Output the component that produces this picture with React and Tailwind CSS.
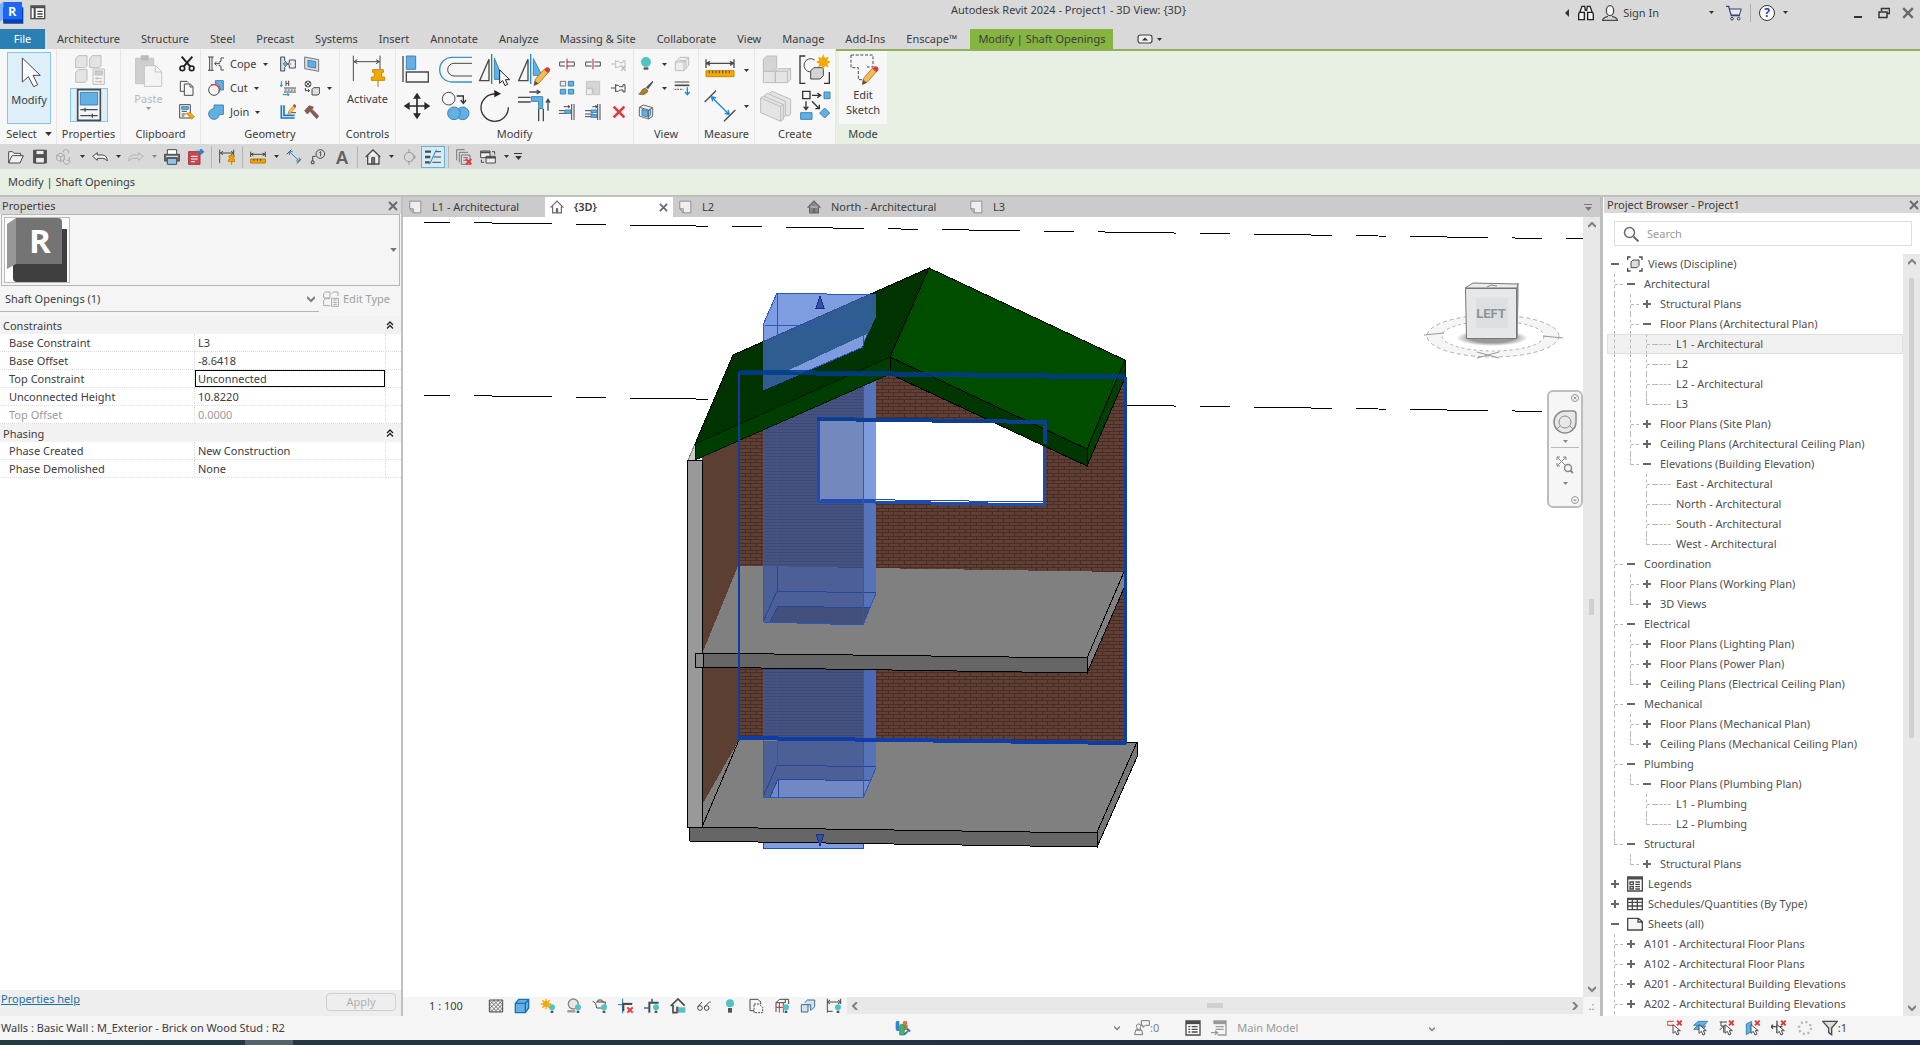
const INK = "#4a4a4a";
const BLUE = "#62b0e4";
const EDGE = "#3a84b8";
const CYAN = "#4fc4c4";
const GOLD = "#f5a800";
const RED = "#e03a3a";
const PALE = "#e4e4e4";
const MUTE = "#bdbdbd";

function Small({ children, className = "h-4 w-4" }) {
  return (
    <svg viewBox="0 0 48 48" className={`${className} shrink-0`} fill="none" stroke={INK} strokeWidth="3" aria-hidden="true">
      {children}
    </svg>
  );
}

function Large({ children }) {
  return (
    <svg viewBox="0 0 96 96" className="h-8 w-8 shrink-0 overflow-visible" fill="none" stroke={INK} strokeWidth="3" aria-hidden="true">
      {children}
    </svg>
  );
}

function Caret({ className = "text-[#333]", size = "h-[3px] w-[5px]" }) {
  return (
    <svg viewBox="0 0 5 3" className={`${size} shrink-0 ${className}`} aria-hidden="true">
      <path d="M0 0h5L2.5 3z" fill="currentColor" />
    </svg>
  );
}

function Chevron({ d, className = "h-2 w-2" }) {
  return (
    <svg viewBox="0 0 8 8" className={`${className} shrink-0`} fill="none" stroke="#808080" strokeWidth="2" aria-hidden="true">
      <path d={d} />
    </svg>
  );
}

const UP = "M0 6l4-4 4 4";
const DOWN = "M0 2l4 4 4-4";
const LEFT = "M6 0L2 4l4 4";
const RIGHT = "M2 0l4 4-4 4";

function Close({ className = "h-[10px] w-[10px]" }) {
  return (
    <svg viewBox="0 0 10 10" className={`${className} shrink-0`} stroke="#6b6b6b" strokeWidth="2" aria-hidden="true">
      <path d="M1 1l8 8M9 1l-8 8" />
    </svg>
  );
}

/* ---------- small icons, 48 unit grid ---------- */

const Cope = () => (
  <Small>
    <path d="M0 3h17M0 43h17M5 3v40M12 3v40M20 23h16M26 17l-6 6 6 6M48 6h-9v10l-7 3M48 42h-9V31l-7-3" />
  </Small>
);
const Cut = () => (
  <Small>
    <path d="M22 2h24v28h-9A20 20 0 0 0 22 10z" fill={BLUE} stroke={EDGE} />
    <circle cx="18" cy="30" r="16" fill="#f5f5f5" />
    <path d="M10 15a17 17 0 0 1 23 22" stroke={RED} strokeWidth="4" />
  </Small>
);
const Join = () => (
  <Small>
    <path d="M18 3h28v28H34a16 16 0 1 1-16-17z" fill={BLUE} stroke={EDGE} />
  </Small>
);
const WallJoin = () => (
  <Small>
    <path d="M2 3h12v10l8 11-8 11v10H2z" fill="#ddd" />
    <path d="M46 12v24H28v-8l-6-4 6-4v-8z" fill="#f2f2f2" />
    <path d="M34 24H10M18 16l-8 8 8 8" stroke="#1c88d8" />
  </Small>
);
const Opening = () => (
  <Small>
    <path d="M2 3l42 8v35L2 38z" fill="#ddd" stroke="#777" />
    <path d="M12 13l23 4v19l-23-4z" fill={BLUE} stroke={EDGE} />
  </Small>
);
const BeamJoin = () => (
  <Small>
    <path d="M18 2v16M26 2v16M18 10h8" />
    <path d="M12 24h36M12 36h36" />
    <path d="M14 30h34" strokeDasharray="6 3" />
    <path d="M4 4v16M0 14l4 6 4-6M8 44h18M22 40l6 4-6 4" stroke="#1c88d8" />
  </Small>
);
const PaintFace = () => (
  <Small>
    <circle cx="12" cy="12" r="9" />
    <path d="M6 6l12 12M18 6L6 18M4 24v8h12M12 28l5 4-5 4M24 28l5-5h18v16l-5 6H24z" fill="#ddd" />
  </Small>
);
const Profile = () => (
  <Small>
    <path d="M4 4v38h40M12 4v30h32" stroke="#1976c8" strokeWidth="5" />
    <path d="M24 26h24" />
    <path d="M26 22l14-16 6 5-14 16-8 3z" fill="#f7c053" stroke="#c77d1b" strokeWidth="2" />
    <path d="M38 5l5-5 7 6-5 5z" fill={RED} stroke="none" />
  </Small>
);
const Hammer = () => (
  <Small>
    <path d="M2 20L16 5l12 4-4 7 20 20-6 8-20-22-8 8z" fill="#8b5a55" stroke="#6b4a48" strokeWidth="2" />
  </Small>
);
const Scissors = () => (
  <Small>
    <path d="M8 2l26 30M40 2L14 32" strokeWidth="6" stroke="#222" />
    <circle cx="10" cy="37" r="7" strokeWidth="5" stroke="#222" />
    <circle cx="38" cy="37" r="7" strokeWidth="5" stroke="#222" />
  </Small>
);
const Copy = () => (
  <Small>
    <path d="M16 34H4V4h20l4 4" />
    <path d="M16 12h18l8 8v26H16zM33 13v8h8" fill="#f8f8f8" />
  </Small>
);
const MatchType = () => (
  <Small>
    <path d="M2 2h32v40H2zM8 22h16M8 30h12M8 36h8" />
    <path d="M8 8h20v8H8z" fill={BLUE} stroke={EDGE} />
    <path d="M22 28l12-2 12 12-8 8z" fill={GOLD} stroke="#b87a00" strokeWidth="2" />
  </Small>
);
const Split = ({ gap }) => (
  <Small>
    <path d={gap ? "M20 18H2v12h18M28 18h18v12H28" : "M18 18H2v12h16M24 18h22v12H24"} />
    <path d="M24 8v32" stroke="#cc2222" />
  </Small>
);
const ArrayIcon = () => (
  <Small>
    <path d="M28 4h16v14H28zM4 28h16v14H4zM28 28h16v14H28z" fill={BLUE} stroke={EDGE} />
    <path d="M4 4h16v14H4z" fill="#eee" stroke="#777" />
  </Small>
);
const ScaleIcon = () => (
  <Small>
    <path d="M4 4h40v40H24V24H4z" fill="#d6d6d6" stroke="#c6c6c6" />
    <path d="M4 26h18v18H4z" stroke={MUTE} fill="#eee" />
  </Small>
);
const Pin = ({ muted }) => (
  <Small>
    <g stroke={muted ? MUTE : INK}>
      <path d="M0 24h14M14 12v24M14 16h8l4 4h10V14h6v22h-6v-6H26l-4 4h-8" />
      {muted && <path d="M30 30l14 14M44 30L30 44" strokeWidth="4" />}
    </g>
  </Small>
);
const TrimOne = ({ multi }) => (
  <Small>
    <path d={multi ? "M0 20h24M0 30h24M0 38h24M22 8h14M31 4l6 4-6 4" : "M0 20h24M0 28h24M14 8h18M27 4l6 4-6 4"} />
    <path d={multi ? "M18 18h18v8H18zM18 32h18v8H18z" : "M18 18h18v10H18z"} fill={BLUE} stroke={EDGE} />
    <path d="M38 0v48M45 0v48" />
  </Small>
);
const Delete = () => (
  <Small>
    <path d="M8 8l32 32M40 8L8 40" stroke={RED} strokeWidth="8" />
  </Small>
);
const Bulb = () => (
  <Small>
    <circle cx="24" cy="18" r="15" fill={CYAN} stroke="none" />
    <path d="M17 34h14v7H17z" fill="#555" stroke="none" />
  </Small>
);
const Displace = () => (
  <Small>
    <path d="M4 18h26v26H4zM4 18L18 4h26v24L30 44M30 18L44 4M14 14h22v22" stroke={MUTE} fill="#eee" />
  </Small>
);
const Brush = () => (
  <Small>
    <path d="M44 2L24 22l6 6L46 6z" fill="#555" stroke="none" />
    <path d="M22 24l8 8C26 44 12 46 2 42c8-2 8-16 20-18z" fill="#a8812a" stroke="#6d5420" strokeWidth="2" />
  </Small>
);
const Linework = () => (
  <Small>
    <path d="M2 6h44" strokeWidth="3" />
    <path d="M2 16h44" strokeWidth="5" />
    <path d="M2 28h26" strokeDasharray="5 3" />
    <path d="M40 22v20M33 36l7 8 7-8" stroke="#1c88d8" strokeWidth="4" />
  </Small>
);
const SelectionBox = () => (
  <Small>
    <path d="M4 10l12-7 28 8v26l-12 8-28-9z" fill="#eef2f4" stroke="#666" />
    <path d="M12 16l18 5v18l-18-5z" fill={BLUE} stroke={EDGE} />
    <path d="M30 21l8-5v17l-8 6z" fill="#a5d0ec" stroke={EDGE} />
    <path d="M4 10l28 8v27M32 18l12-7" stroke="#666" />
  </Small>
);

/* ---------- large icons, 96 unit grid ---------- */

const ArrowIcon = () => (
  <Large>
    <path d="M28 6v72l18-16 16 30 12-6-14-28h22z" fill="#fcfcfc" />
  </Large>
);
const TypeProps = () => (
  <Large>
    <g stroke={MUTE} fill={PALE}>
      <path d="M8 18l8-10h26v30l-6 6H8zM50 18l8-10h26v30l-6 6H50zM8 58l8-8h26v32l-6 6H8z" />
      <path d="M60 48h34v46H60z" fill="#f4f4f4" />
      <path d="M66 54h22v12H66z" fill="#ccc" />
      <path d="M66 76h22M66 86h22M72 72v8M82 82v8" />
    </g>
  </Large>
);
const PropsIcon = () => (
  <Large>
    <path d="M14 2h68v92H14z" fill="#f2f6f8" strokeWidth="5" />
    <path d="M22 10h52v38H22z" fill={BLUE} stroke={EDGE} />
    <path d="M22 62h52M22 80h52M36 56v12M58 74v12" strokeWidth="4" />
  </Large>
);
const PasteIcon = () => (
  <Large>
    <g stroke="#c4c4c4">
      <path d="M8 10h54v76H8z" fill="#cfcfcf" />
      <path d="M24 2h22v14H24z" fill="#b9b9b9" />
      <path d="M34 32h34l18 18v44H34zM67 33v18h18" fill="#f4f4f4" />
    </g>
  </Large>
);
const ActivateIcon = () => (
  <Large>
    <path d="M4 2v76M84 2v40M6 20h76M16 14L6 20l10 6M72 14l10 6-10 6" />
    <path d="M62 44h32v8h-5v14h9v10H58V66h9V52h-5z" fill={GOLD} stroke="#c98800" />
    <path d="M78 76v20" stroke="#b87a00" />
  </Large>
);
const Align = () => (
  <Large>
    <path d="M6 6v78M16 54h66v30H16z" strokeWidth="4" />
    <path d="M16 6h28v40H16z" fill={BLUE} stroke={EDGE} />
  </Large>
);
const Offset = () => (
  <Large>
    <path d="M96 10H36a35 35 0 0 0 0 74h60" stroke="#3a93d0" strokeWidth="4" />
    <path d="M96 28H42a19 19 0 0 0 0 38h54" />
  </Large>
);
const MirrorAxis = () => (
  <Large>
    <path d="M30 16v64H2z" strokeWidth="4" />
    <path d="M46 12v64h26z" fill={BLUE} stroke={EDGE} />
    <path d="M38 0v90" stroke="#1d9a4c" strokeWidth="4" />
    <path d="M62 48v40l9-8 7 15 8-4-7-14h13z" fill="#fff" stroke="#222" />
  </Large>
);
const MirrorDraw = () => (
  <Large>
    <path d="M30 16v64H2z" strokeWidth="4" />
    <path d="M46 14v50h26z" fill={BLUE} stroke={EDGE} />
    <path d="M38 0v90" stroke="#1c88d8" strokeWidth="4" />
    <path d="M52 76l26-30 12 10-26 30-16 8z" fill="#f3bb55" stroke="#b8802a" />
    <path d="M78 46l8-6a9 9 0 0 1 10 12l-6 6z" fill={RED} stroke="none" />
    <path d="M50 80l12 9-14 6z" fill="#555" stroke="none" />
  </Large>
);
const Move = () => (
  <Large>
    <path d="M48 16v64M16 48h64" stroke="#2a2a2a" strokeWidth="5" />
    <path d="M48 8L36 26h24zM48 88L36 70h24zM8 48l18-12v24zM88 48L70 36v24z" fill="#2a2a2a" stroke="none" />
  </Large>
);
const CopyIcon = () => (
  <Large>
    <circle cx="26" cy="26" r="19" />
    <path d="M50 18h20v20M62 30l8 10 8-10" stroke="#333" strokeWidth="4" />
    <circle cx="68" cy="70" r="19" fill={BLUE} stroke={EDGE} />
    <circle cx="42" cy="70" r="19" fill={BLUE} stroke={EDGE} />
  </Large>
);
const Rotate = () => (
  <Large>
    <path d="M50 12A41 41 0 1 0 88 52" stroke="#333" strokeWidth="4" />
    <path d="M46 0l20 11-20 11z" fill="#222" stroke="none" />
  </Large>
);
const Trim = () => (
  <Large>
    <path d="M0 22h38M0 36h38M34 6h30M56 0l10 6-10 6M62 56v38M76 56v38M90 62V30M84 38l6-10 6 10" strokeWidth="4" />
    <path d="M40 20h34v36H62V34H40z" fill={BLUE} stroke={EDGE} />
  </Large>
);
const Measure = () => (
  <Large>
    <path d="M6 16v26M90 16v26M8 28h80M18 22L8 28l10 6M78 22l10 6-10 6" strokeWidth="4" />
    <path d="M6 50h84v18H6z" fill={GOLD} stroke="#c98800" />
    <path d="M16 50v8M26 50v8M36 50v8M46 50v8M56 50v8M66 50v8M76 50v8" />
  </Large>
);
const Dimension = () => (
  <Large>
    <path d="M2 36L36 2M60 94l34-34" strokeWidth="4" />
    <path d="M22 20l54 54M22 20l4 14M22 20l14 4M76 74l-4-14M76 74l-14-4" stroke="#1c88d8" strokeWidth="4" />
  </Large>
);
const Assembly = () => (
  <Large>
    <g stroke={MUTE} fill={PALE}>
      <path d="M10 16l10-10h30v38l-10 8H10z" fill="#d4d4d4" />
      <path d="M10 52h36v34H10zM46 52l10-8h36v32l-10 10H46z" />
      <path d="M46 52h36v34M82 52l10-8" />
    </g>
  </Large>
);
const Group = () => (
  <Large>
    <path d="M22 6H6v82h16M78 88h16V54" stroke="#333" strokeWidth="4" />
    <path d="M50 18a20 20 0 1 0-12 36" />
    <path d="M38 50l10-9h28v24l-10 10H38z" fill="#d4d4d4" />
    <path d="M76 0l4 12 12-4-4 11 10 5-10 5 4 11-12-4-4 12-5-12-11 4 4-11-10-5 10-5-4-11 11 4z" fill={GOLD} stroke="none" />
  </Large>
);
const Parts = () => (
  <Large>
    <g stroke={MUTE} fill={PALE}>
      <path d="M28 10l8-6 56 24v44l-8 6-56-24z" />
      <path d="M14 16l8-6 54 24v44l-8 6-54-24z" />
      <path d="M2 24l8-6 60 26v44l-8 6L2 68zM2 24l60 26v44M62 50l8-6" />
    </g>
  </Large>
);
const Similar = () => (
  <Large>
    <path d="M14 4h22v22H14zM42 16h24M58 9l10 7-10 7M24 34v24M17 50l7 9 7-9M42 34l22 22M64 44v12H52" stroke="#333" strokeWidth="4" />
    <path d="M78 6h18v20H78zM8 68h34v20H8zM80 54l15 15-15 15-15-15z" fill={BLUE} stroke={EDGE} />
  </Large>
);
const EditSketch = () => (
  <Large>
    <path d="M12 6h66v36H60M12 6v38h22v36h16" strokeDasharray="9 5" />
    <path d="M50 76l26-30 12 10-26 30-16 8z" fill="#f3bb55" stroke="#b8802a" />
    <path d="M76 46l8-6a9 9 0 0 1 10 12l-6 6z" fill={RED} stroke="none" />
    <path d="M48 80l12 9-14 6z" fill="#555" stroke="none" />
  </Large>
);

/* ---------- ribbon ---------- */

function IconButton({ label, className = "h-6 w-6", children }) {
  return (
    <button aria-label={label} className={`flex shrink-0 items-center justify-center ${className}`}>
      {children}
    </button>
  );
}

function Panel({ title, className, children }) {
  return (
    <section className={`flex flex-col border-r border-[#e6e6e6] pt-[3px] ${className}`}>
      <div className="flex h-[72px] justify-center">{children}</div>
      <h2 className="flex h-5 items-center justify-center gap-2">{title}</h2>
    </section>
  );
}

function Ribbon() {
  return (
    <div className="flex h-[95px] bg-[#e8efe3]">
      <div className="flex bg-[#f7f7f7]">
        <Panel title={<>Select <Caret size="h-1 w-[7px]" /></>} className="w-[57px] pl-[2px]">
          <button className="flex w-11 flex-col items-center border border-[#86c5e6] bg-[#deeff9] pt-[3px]">
            <ArrowIcon />
            <span className="mt-1">Modify</span>
          </button>
        </Panel>
        <Panel title="Properties" className="w-16">
          <div className="flex flex-col items-center gap-[2px]">
            <IconButton label="Type Properties" className="h-[34px] w-9"><TypeProps /></IconButton>
            <IconButton label="Properties palette" className="h-[34px] w-[38px] border border-[#86c5e6] bg-[#deeff9]"><PropsIcon /></IconButton>
          </div>
        </Panel>
        <Panel title="Clipboard" className="w-20">
          <button className="flex w-[52px] flex-col items-center pt-[3px] text-[#b9b9b9]">
            <PasteIcon />
            <span className="mt-1">Paste</span>
            <Caret className="text-[#999]" />
          </button>
          <div>
            <IconButton label="Cut to clipboard"><Scissors /></IconButton>
            <IconButton label="Copy to clipboard"><Copy /></IconButton>
            <IconButton label="Match type"><MatchType /></IconButton>
          </div>
        </Panel>
        <Panel title="Geometry" className="w-[139px]">
          <div className="w-[68px]">
            <button className="flex h-6 items-center gap-[6px]"><Cope />Cope <Caret /></button>
            <button className="flex h-6 items-center gap-[6px]"><Cut />Cut <Caret /></button>
            <button className="flex h-6 items-center gap-[6px]"><Join />Join <Caret /></button>
          </div>
          <div className="grid grid-cols-2">
            <IconButton label="Wall joins"><WallJoin /></IconButton>
            <IconButton label="Wall opening"><Opening /></IconButton>
            <IconButton label="Beam joins"><BeamJoin /></IconButton>
            <IconButton label="Paint"><PaintFace /></IconButton>
            <IconButton label="Edit profile"><Profile /></IconButton>
            <IconButton label="Demolish"><Hammer /></IconButton>
          </div>
          <div className="flex w-2 items-center justify-end"><Caret /></div>
        </Panel>
        <Panel title="Controls" className="w-14">
          <button className="flex flex-col items-center pt-[3px]">
            <ActivateIcon />
            <span className="mt-1">Activate</span>
          </button>
        </Panel>
        <Panel title="Modify" className="w-[238px]">
          <div className="grid grid-cols-4">
            <IconButton label="Align" className="h-9 w-[39px]"><Align /></IconButton>
            <IconButton label="Offset" className="h-9 w-[39px]"><Offset /></IconButton>
            <IconButton label="Mirror - Pick Axis" className="h-9 w-[39px]"><MirrorAxis /></IconButton>
            <IconButton label="Mirror - Draw Axis" className="h-9 w-[39px]"><MirrorDraw /></IconButton>
            <IconButton label="Move" className="h-9 w-[39px]"><Move /></IconButton>
            <IconButton label="Copy" className="h-9 w-[39px]"><CopyIcon /></IconButton>
            <IconButton label="Rotate" className="h-9 w-[39px]"><Rotate /></IconButton>
            <IconButton label="Trim" className="h-9 w-[39px]"><Trim /></IconButton>
          </div>
          <div className="grid grid-cols-3">
            <IconButton label="Split element" className="h-6 w-[26px]"><Split /></IconButton>
            <IconButton label="Split with gap" className="h-6 w-[26px]"><Split gap /></IconButton>
            <IconButton label="Unpin" className="h-6 w-[26px]"><Pin muted /></IconButton>
            <IconButton label="Array" className="h-6 w-[26px]"><ArrayIcon /></IconButton>
            <IconButton label="Scale" className="h-6 w-[26px]"><ScaleIcon /></IconButton>
            <IconButton label="Pin" className="h-6 w-[26px]"><Pin /></IconButton>
            <IconButton label="Trim single" className="h-6 w-[26px]"><TrimOne /></IconButton>
            <IconButton label="Trim multiple" className="h-6 w-[26px]"><TrimOne multi /></IconButton>
            <IconButton label="Delete" className="h-6 w-[26px]"><Delete /></IconButton>
          </div>
        </Panel>
        <Panel title="View" className="w-[65px]">
          <div className="w-8">
            <button aria-label="Hide" className="flex h-6 items-center gap-2"><Bulb /><Caret /></button>
            <button aria-label="Override" className="flex h-6 items-center gap-2"><Brush /><Caret /></button>
            <button aria-label="Selection box" className="flex h-6 items-center"><SelectionBox /></button>
          </div>
          <div>
            <IconButton label="Displace"><Displace /></IconButton>
            <IconButton label="Linework"><Linework /></IconButton>
          </div>
        </Panel>
        <Panel title="Measure" className="w-14">
          <div>
            <button aria-label="Measure" className="flex h-9 items-center gap-2"><Measure /><Caret /></button>
            <button aria-label="Dimension" className="flex h-9 items-center gap-2"><Dimension /><Caret /></button>
          </div>
        </Panel>
        <Panel title="Create" className="w-[81px]">
          <div className="grid grid-cols-2">
            <IconButton label="Create assembly" className="h-9 w-[38px]"><Assembly /></IconButton>
            <IconButton label="Create group" className="h-9 w-[38px]"><Group /></IconButton>
            <IconButton label="Create parts" className="h-9 w-[38px]"><Parts /></IconButton>
            <IconButton label="Create similar" className="h-9 w-[38px]"><Similar /></IconButton>
          </div>
        </Panel>
      </div>
      <div className="flex flex-1 border-t-2 border-[#8fb05c] pl-[3px]">
        <section className="flex w-12 flex-col">
          <button className="flex h-[73px] flex-col items-center bg-[#f7f7f7] pt-[2px] leading-[15px]">
            <EditSketch />
            <span className="mt-[2px]">Edit</span>
            <span>Sketch</span>
          </button>
          <h2 className="flex h-5 items-center justify-center">Mode</h2>
        </section>
      </div>
    </div>
  );
}

const MENU = [
  "Architecture", "Structure", "Steel", "Precast", "Systems", "Insert", "Annotate", "Analyze",
  "Massing & Site", "Collaborate", "View", "Manage", "Add-Ins", "Enscape™",
];

function TitleBar() {
  return (
    <header className="relative flex h-[29px] items-start justify-between">
      <div className="flex items-center gap-[6px]">
        <svg viewBox="0 0 72 72" className="h-6 w-6" aria-hidden="true">
          <path d="M6 22h64v49H10z" fill="#0a3fae" />
          <path d="M0 12L10 6v50L0 66z" fill="#7fb0ff" />
          <path d="M10 6h56v52H10z" fill="#1a66f5" />
          <text x="24" y="48" fill="#fff" fontSize="38" fontWeight="700" fontFamily="Open Sans, sans-serif">R</text>
        </svg>
        <IconButton label="Home" className="h-6 w-4">
          <Small>
            <path d="M3 6h41v38H3z" fill="#fff" strokeWidth="4" />
            <path d="M3 10h41M14 10v34" strokeWidth="6" />
            <path d="M22 22h16M22 30h16M22 38h16" strokeWidth="4" />
          </Small>
        </IconButton>
      </div>
      <h1 className="absolute inset-x-0 top-[1px] pl-[217px] text-center leading-[18px]">Autodesk Revit 2024 - Project1 - 3D View: &#123;3D&#125;</h1>
      <div className="relative flex h-[25px] items-center pr-[6px]">
        <svg viewBox="0 0 4 8" className="mr-[9px] h-2 w-1" aria-hidden="true"><path d="M4 0v8L0 4z" fill="#333" /></svg>
        <Small>
          <path d="M6 20L12 4h8l2 12h4l2-12h8l6 16M4 22h15v22H2V28zM29 22h15l2 6v16H29z" fill="#f4f4f4" stroke="#222" strokeWidth="4" />
        </Small>
        <button className="ml-2 flex items-center gap-[5px]">
          <Small>
            <ellipse cx="24" cy="17" rx="11" ry="15" fill="#f4f4f4" strokeWidth="4" />
            <path d="M2 46c0-8 8-9 16-12M46 46c0-8-8-9-16-12M0 46h48" strokeWidth="4" />
          </Small>
          Sign In
        </button>
        <button aria-label="Account menu" className="ml-[50px] mr-3"><Caret /></button>
        <IconButton label="App store" className="mr-2 h-5 w-4">
          <Small>
            <path d="M0 4h8l8 28h26" stroke="#34446a" strokeWidth="4" />
            <path d="M10 12h36l-6 18H16z" fill="#e4e8f2" stroke="#34446a" />
            <circle cx="18" cy="41" r="4" stroke="#34446a" /><circle cx="38" cy="41" r="4" stroke="#34446a" />
          </Small>
        </IconButton>
        <span className="h-[18px] w-px bg-[#b0b0b0]" />
        <button aria-label="Help" className="ml-2 flex h-4 w-4 items-center justify-center rounded-full border border-[#333] bg-white text-[12px] font-bold text-[#2345b0]">?</button>
        <span className="ml-2 mr-[66px]"><Caret /></span>
        <button aria-label="Minimize" className="mr-4 mt-2 h-[2px] w-2 bg-[#333]" />
        <IconButton label="Restore" className="mr-3 h-4 w-3">
          <svg viewBox="0 0 12 12" className="h-3 w-3" fill="none" stroke="#333" strokeWidth="1.5">
            <path d="M3.500 4V1.500h8v5H9M1 5h8v5.500H1z" />
          </svg>
        </IconButton>
        <IconButton label="Close" className="h-4 w-3"><Close className="h-3 w-3" /></IconButton>
      </div>
    </header>
  );
}

function MenuBar() {
  return (
    <nav className="flex h-5 items-stretch">
      <button className="w-[45px] bg-[#2b80b3] text-white">File</button>
      <div className="flex gap-px">
        {MENU.map((m) => (
          <button key={m} className="px-[10px] first:pl-3">{m}</button>
        ))}
      </div>
      <button className="ml-[3px] bg-[#85b440] px-2">Modify | Shaft Openings</button>
      <button aria-label="Ribbon display" className="ml-6 flex items-center gap-1">
        <svg viewBox="0 0 16 10" className="h-[10px] w-4">
          <rect x="1" y="1" width="14" height="8" rx="2.500" fill="#eee" stroke="#444" strokeWidth="1.200" />
          <path d="M5 6.500h6L8 3.500z" fill="#333" />
        </svg>
        <Caret />
      </button>
    </nav>
  );
}

const Sep = () => <span className="flex h-[22px] w-[7px] justify-center"><span className="w-px bg-[#b5b5b5]" /></span>;
const Drop = ({ muted }) => (
  <button aria-label="More" className="flex w-3 justify-center"><Caret className={muted ? "text-[#888]" : "text-[#333]"} /></button>
);

function QuickAccess() {
  return (
    <div className="flex h-[25px] items-center pl-1">
      <IconButton label="Open"><Small><path d="M2 42V8h12l4 5h20v7M2 42l10-22h34L36 42z" fill="#f2f2f2" /></Small></IconButton>
      <IconButton label="Save"><Small><path d="M5 4h38v38H5z" fill="#555" /><path d="M12 4h24v13H12zM11 25h26v17H11z" fill="#eee" /></Small></IconButton>
      <IconButton label="Synchronize"><Small><path d="M2 18l12-6 11 6v14l-11 6-12-6zM2 18l12 6 11-6M14 24v14M22 10a8 8 0 1 1 14 4M26 28a10 10 0 1 0 16 6M40 24v10h-8" stroke="#aaa" /></Small></IconButton>
      <Drop />
      <IconButton label="Undo"><Small><path d="M2 22l14-11v7h16q14 2 14 18-5-8-14-8H16v6z" fill="#f4f4f4" /></Small></IconButton>
      <Drop />
      <IconButton label="Redo"><Small><path d="M46 22L32 11v7H16Q2 20 2 36q5-8 14-8h16v6z" stroke="#b4b4b4" /></Small></IconButton>
      <Drop muted />
      <IconButton label="Print"><Small><path d="M10 16V2h28v14" fill="#fff" /><path d="M1 16h46v20H1z" fill="#666" /><path d="M6 22h36" stroke="#eee" /><path d="M10 28h28v18H10z" fill="#8cc6ea" /></Small></IconButton>
      <IconButton label="Export PDF"><Small><path d="M2 8h34v38H2z" fill="#c9484e" stroke="#a83238" /><path d="M9 22h20M9 30h20M9 38h12" stroke="#fff" /><path d="M22 8h22M36 0l10 8-10 8" stroke="#2b80c3" strokeWidth="5" /></Small></IconButton>
      <Sep />
      <IconButton label="Align dimension"><Small><path d="M2 2v40M44 2v22M4 12h38M12 7l-8 5 8 5M36 7l8 5-8 5" /><path d="M30 20h16v5h-3v7h5v6H28v-6h5v-7h-3zM38 38v10" fill={GOLD} stroke="#c98800" /></Small></IconButton>
      <Sep />
      <IconButton label="Measure"><Small><path d="M2 8v16M46 8v16M2 16h44M10 12l-7 4 7 4M38 12l7 4-7 4" /><path d="M2 30h44v12H2z" fill={GOLD} stroke="#b87a00" /><path d="M12 30v6M22 30v6M32 30v6" /></Small></IconButton>
      <Drop />
      <IconButton label="Aligned dimension"><Small><path d="M2 16L16 2M32 44l14-14" /><path d="M10 8l30 28M10 8v10M10 8h10M40 36V26M40 36H30" stroke="#1c88d8" /></Small></IconButton>
      <IconButton label="Tag by category"><Small><circle cx="31" cy="15" r="13" /><path d="M28 11l4-3v14M4 44v-8h8v8zM8 36V22h9" /></Small></IconButton>
      <IconButton label="Text"><span className="text-[18px] font-semibold leading-none text-[#606060]">A</span></IconButton>
      <Sep />
      <IconButton label="3D view"><Small><path d="M2 24L24 3l22 21M8 20v25h34V20" fill="#f2f2f2" strokeWidth="4" /><path d="M20 26h9v19h-9z" fill="#777" /></Small></IconButton>
      <Drop />
      <IconButton label="Section"><Small><circle cx="24" cy="24" r="14" stroke="#999" /><path d="M24 0v10M24 38v10" stroke="#999" /><path d="M32 10l14 14-14 14q8-14 0-28z" fill="#aaa" stroke="none" /></Small></IconButton>
      <IconButton label="Thin lines" className="h-[22px] w-6 border border-[#62b3e0] bg-[#d6ebf6]">
        <Small><path d="M0 8h18M0 24h16M0 40h14" strokeWidth="7" /><path d="M30 8h18M26 24h22M22 40h26" /><path d="M34 2L14 46" stroke="#1c88d8" /></Small>
      </IconButton>
      <Sep />
      <IconButton label="Close inactive"><Small><path d="M2 34V2h24M10 40V10h26M16 18h26v28H16zM22 26h14M22 34h10" stroke="#777" /><path d="M30 30l16 16M46 30L30 46" stroke={RED} strokeWidth="6" /></Small></IconButton>
      <IconButton label="Switch windows"><Small><path d="M2 6h28v20H2zM18 22h28v20H18z" fill="#eee" /><path d="M2 10h28M18 26h28" strokeWidth="5" /><path d="M36 8h8v8M4 32v8h8" /></Small></IconButton>
      <Drop />
      <button aria-label="Customize" className="flex w-3 flex-col items-center gap-[2px]">
        <span className="h-px w-2 bg-[#333]" />
        <Caret size="h-1 w-[7px]" />
      </button>
    </div>
  );
}

/* ---------- properties palette ---------- */

const GROUPS = [
  {
    name: "Constraints",
    rows: [
      ["Base Constraint", "L3"],
      ["Base Offset", "-8.6418"],
      ["Top Constraint", "Unconnected"],
      ["Unconnected Height", "10.8220"],
      ["Top Offset", "0.0000"],
    ],
  },
  {
    name: "Phasing",
    rows: [
      ["Phase Created", "New Construction"],
      ["Phase Demolished", "None"],
    ],
  },
];

function Collapse() {
  return (
    <svg viewBox="0 0 8 8" className="h-2 w-2" fill="none" stroke="#222" strokeWidth="1.300" aria-hidden="true">
      <path d="M1 4l3-3 3 3M1 7.500l3-3 3 3" />
    </svg>
  );
}

function PropertyGroup({ group }) {
  return (
    <tbody>
      <tr className="h-[18px] bg-[#f2f2f2]">
        <th colSpan="2" className="pl-[3px] text-left font-normal">{group.name}</th>
        <td><button aria-label={`Collapse ${group.name}`} className="block"><Collapse /></button></td>
      </tr>
      {group.rows.map(([name, value]) => (
        <tr key={name} className={`h-[18px] ${name === "Top Offset" ? "text-[#9a9a9a]" : ""}`}>
          <td className="border-b border-r border-dotted border-[#dcdcdc] pl-[9px]">{name}</td>
          <td className="border-b border-r border-dotted border-[#dcdcdc]">
            <input
              aria-label={name}
              defaultValue={value}
              disabled={name === "Top Offset"}
              className={`block h-[17px] w-full border px-[2px] ${name === "Top Constraint" ? "border-black" : "border-transparent"}`}
            />
          </td>
          <td className="border-b border-dotted border-[#dcdcdc]" />
        </tr>
      ))}
    </tbody>
  );
}

function Properties() {
  return (
    <aside className="flex w-[401px] shrink-0 flex-col bg-[#f5f5f5]">
      <div className="flex h-[17px] items-center justify-between bg-[#d8d8d8] pl-[2px] pr-[3px]">
        <h2>Properties</h2>
        <button aria-label="Close properties"><Close /></button>
      </div>
      <div className="mx-px flex h-[72px] items-center justify-between border border-[#b5b5b5] pl-[2px] pr-[2px]">
        <svg viewBox="0 0 66 66" className="h-[66px] w-[66px]" aria-hidden="true">
          <rect x="0.500" y="0.500" width="65" height="65" fill="#fdfdfd" stroke="#bbb" />
          <path d="M9 12h54v53H13q-4 0-4-4z" fill="#3f3f3f" />
          <path d="M3 7l9-6v46l-9 5z" fill="#969696" />
          <path d="M12 1h42q4 0 4 4v42H12z" fill="#747474" />
          <text x="25" y="36" fill="#fff" fontSize="33" fontWeight="700" fontFamily="Open Sans, sans-serif">R</text>
        </svg>
        <button aria-label="Type selector"><Caret className="text-[#777]" size="h-1 w-[7px]" /></button>
      </div>
      <div className="flex h-[30px] items-start pt-px">
        <div className="relative flex-1 border-b border-[#b5b5b5]">
          <select aria-label="Instance filter" className="h-6 w-full appearance-none pl-[5px]">
            <option>Shaft Openings (1)</option>
          </select>
          <span className="pointer-events-none absolute right-1 top-2"><Chevron d={DOWN} /></span>
        </div>
        <button className="flex h-6 w-[82px] items-center gap-1 pl-1 text-[#a0a0a0]">
          <Small>
            <path d="M2 8l5-5h14v18H2zM26 8l5-5h14v12M2 28l5-5h14M2 28v16h20M26 22h20v24H26zM31 27h10M31 34h10M31 40h10" stroke="#a8a8a8" />
          </Small>
          Edit Type
        </button>
      </div>
      <div className="flex-1 bg-white">
        <table className="w-full table-fixed border-separate border-spacing-0 leading-[15px]">
          <colgroup>
            <col className="w-[195px]" />
            <col />
            <col className="w-[15px]" />
          </colgroup>
          {GROUPS.map((g) => <PropertyGroup key={g.name} group={g} />)}
        </table>
      </div>
      <div className="flex h-[26px] items-center justify-between bg-[#eeeeee] pl-[1px] pr-[5px]">
        <a href="#help" className="pb-2 text-[#1b6fa8] underline">Properties help</a>
        <button disabled className="mb-[2px] h-[18px] w-[70px] rounded-sm border border-[#cfcfcf] text-[#b0b0b0]">Apply</button>
      </div>
    </aside>
  );
}

/* ---------- 3D view ---------- */

const SheetIcon = () => (
  <Small className="h-[14px] w-[14px]"><path d="M6 4h38v40H18V30H6z" stroke="#888" fill="#eee" /><path d="M6 30l12 14" stroke="#888" /></Small>
);
const HomeIcon = ({ fill }) => (
  <Small className="h-[14px] w-[14px]"><path d="M2 26L24 4l22 22M9 22v22h30V22" fill={fill} stroke="#666" strokeWidth="4" /><path d="M20 28h8v16h-8z" fill="#666" stroke="none" /></Small>
);

function ViewTab({ icon, label, className, active }) {
  return (
    <button className={`flex items-center gap-[10px] pl-[5px] ${className} ${active ? "bg-white font-semibold" : ""}`}>
      {icon}
      {label}
    </button>
  );
}

function Scene() {
  return (
    <svg viewBox="403 217 1180 780" className="block h-full w-full" shapeRendering="crispEdges" role="img" aria-label="3D view">
      <defs>
        <pattern id="brick" width="11" height="7" patternUnits="userSpaceOnUse">
          <rect width="11" height="7" fill="#5f4036" />
          <path d="M0 0.500h11M0 4.500h11M2.500 0.500v4M8.500 4.500v3" stroke="#4a2c22" strokeWidth="1" />
        </pattern>
        <pattern id="shade" width="6" height="3" patternUnits="userSpaceOnUse">
          <rect width="6" height="3" fill="#46527f" />
          <path d="M0 0.500h6" stroke="#3e4978" />
        </pattern>
        <radialGradient id="shadow">
          <stop offset="0.600" stopColor="#999" />
          <stop offset="1" stopColor="#fff" />
        </radialGradient>
      </defs>
      <g stroke="#000" strokeWidth="1" strokeDasharray="78 24 30 24" strokeDashoffset="105">
        <path d="M423 222L1583 239" />
        <path d="M423 395L1583 412" />
      </g>

      <path d="M702 448l37-17v309l-37 87z" fill="#5c3f33" />
      <path d="M739 370l386 7v367l-386-5z" fill="url(#brick)" />
      <path d="M817 418l228 3v84l-228-4z" fill="#fff" />

      {/* upper part of the shaft, seen through the wall */}
      <path d="M763 400l100-40v265l-100-3z" fill="url(#shade)" />
      <path d="M863 365h13v228l-13 32z" fill="#5672b8" />
      <path d="M817 418l46 1v83l-46-1z" fill="#7388bd" />
      <path d="M863 419h13v83h-13z" fill="#7f9be0" />

      <path d="M818 419l226 3v83l-226-4z" fill="none" stroke="#1f4cb0" strokeWidth="3" />
      <path d="M820 499l223 3" stroke="#1f4cb0" />

      {/* lower part of the shaft */}
      <path d="M763 665h100v76H763z" fill="url(#shade)" />
      <path d="M863 665h13v80h-13z" fill="#4a68b4" />

      {/* upper slab */}
      <path d="M738 566l386 6-37 87-385-5z" fill="#808080" />
      <path d="M763 566l100 2v57l-100-3z" fill="#4c5f96" />
      <path d="M863 568h13v25l-13 32z" fill="#5672b8" />
      <path d="M778 606l92 2-7 17-93-3z" fill="#44507c" />
      <path d="M777 591l99 2M778 606l92 2M763 622l14-31v-25M770 622l8-16" fill="none" stroke="#24479c" />
      <path d="M695 653l392 5v15l-392-6z" fill="#666" stroke="#000" />
      <path d="M1087 658l37-86v16l-37 85z" fill="#808080" stroke="#000" />

      {/* lower slab */}
      <path d="M763 840h100v8H763z" fill="#7f9de0" stroke="#2050b8" />
      <path d="M739 740l398 2-40 92-408-6z" fill="#808080" />
      <path d="M763 741h100v57l-100-1z" fill="#4c5f96" />
      <path d="M863 741h13v27l-13 30z" fill="#5672b8" />
      <path d="M778 779l92 2-7 17-93-1z" fill="#7288c4" />
      <path d="M777 765l99 2M778 779l92 2M763 797l14-32v-20M770 797l8-18v18" fill="none" stroke="#24479c" />
      <path d="M689 827l408 6v14l-408-6z" fill="#666" stroke="#000" />
      <path d="M1097 832l40-90v15l-40 90z" fill="#777" stroke="#000" />
      <path d="M1125 742h12M702 827l37-87" stroke="#000" />

      <path d="M688 460l7-16v16z" fill="#ccc" stroke="#888" />
      <path d="M687 460h15v367h-15z" fill="#999" stroke="#000" />
      <path d="M695 653h8v14h-8z" fill="#888" stroke="#000" />

      {/* roof */}
      <path d="M929 268L733 355l-38 89 195-87z" fill="#003300" stroke="#000" />
      <path d="M929 268l196 92-38 89-197-92z" fill="#004d00" stroke="#000" />
      <path d="M890 357l-195 87v16l195-86z" fill="#003d00" stroke="#001a00" />
      <path d="M890 357l197 92v17l-197-92z" fill="#003600" stroke="#000" />
      <path d="M1087 449l38-89v18l-38 88z" fill="#004000" stroke="#000" />

      {/* shaft above the roof */}
      <path d="M777 293l99 2v22l-14 30-99 43v-65z" fill="#4471d2" fillOpacity="0.690" />
      <path d="M787 371l75-35 5-2-5 13-60 26z" fill="#7f9be0" />
      <path d="M763 390v-65l14-32 99 2M763 325l100 1M777 293v78M863 326v20M763 390l100-43M763 430v192M863 387v238M777 424v142M763 622l100 3 13-32M763 669v128M863 670v128M777 669v96M763 797l100 1 13-30" fill="none" stroke="#2c56c0" />
      <path d="M820 296l-4 12h8zM816 834h8l-4 12z" fill="#3350b0" stroke="#1b2f80" />

      {/* highlighted wall */}
      <g stroke="#0f3da8" fill="none">
        <path d="M739 741V372" strokeWidth="2" />
        <path d="M739 372l386 5" strokeWidth="5" stroke="#003c88" strokeOpacity="0.850" />
        <path d="M1125 377v367" strokeWidth="3" />
        <path d="M739 738l387 5" strokeWidth="4" />
        <path d="M817 419l228 3v22" strokeWidth="4" stroke="#0c3f90" />
      </g>

      {/* view cube */}
      <g shapeRendering="auto">
        <ellipse cx="1493" cy="336" rx="66" ry="21" fill="#f5f5f5" stroke="#b0b0b0" strokeDasharray="4 3" />
        <ellipse cx="1493" cy="336" rx="51" ry="15" fill="#fff" stroke="#b0b0b0" strokeDasharray="3 3" />
        <ellipse cx="1492" cy="338" rx="36" ry="8" fill="url(#shadow)" />
        <path d="M1424 335l20-2M1543 336l20 2M1477 352l22 6M1477 358l22-6" stroke="#999" />
        <path d="M1465 288l8-5 45 1-1 4z" fill="#ececec" stroke="#777" />
        <path d="M1517 288l1-5v14l-1 41z" fill="#999" stroke="#888" />
        <path d="M1465.500 288.500h51v50h-50z" fill="#e6e7e8" stroke="#777" />
        <path d="M1476 298h32v30h-32z" fill="#dedfe1" />
        <path d="M1487 287l4-2 6 1" stroke="#888" fill="none" />
        <text x="1491" y="318" textAnchor="middle" fontSize="13" fontWeight="700" fill="#8c959c" fontFamily="Roboto, sans-serif">LEFT</text>
      </g>
    </svg>
  );
}

function NavBar() {
  return (
    <div className="absolute right-0 top-[173px] flex h-[118px] w-9 flex-col items-center rounded-md border-2 border-[#bdbdbd] bg-[#f6f6f6] text-[#888]">
      <button aria-label="Close navigation bar" className="mr-[2px] mt-[2px] self-end">
        <svg viewBox="0 0 8 8" className="h-2 w-2" fill="none" stroke="#999"><circle cx="4" cy="4" r="3.500" /><path d="M2.500 2.500l3 3M5.500 2.500l-3 3" /></svg>
      </button>
      <button aria-label="Steering wheel" className="mt-2">
        <svg viewBox="0 0 24 24" className="h-6 w-6" fill="#e8e8e8" stroke="#8c8c8c">
          <path d="M12 1h8q3 0 3 3v8a11 11 0 1 1-11-11z" strokeWidth="1.500" />
          <circle cx="12" cy="12" r="6" />
          <path d="M7 16l-3 3M17 16l3 3" />
        </svg>
      </button>
      <button aria-label="Wheel options" className="mt-[6px]"><Caret className="text-[#888]" /></button>
      <span className="mt-1 h-px w-7 bg-[#bbb]" />
      <button aria-label="Zoom" className="mt-2">
        <svg viewBox="0 0 18 18" className="h-[18px] w-[18px]" fill="none" stroke="#888">
          <path d="M1 1l9 9M10 1l-9 9M1 4V1h3M7 1h3v3M1 7v3h3" />
          <circle cx="12" cy="12" r="3.500" strokeWidth="1.500" />
          <path d="M14.500 14.500L17 17" strokeWidth="2" />
        </svg>
      </button>
      <button aria-label="Zoom options" className="mt-2"><Caret className="text-[#888]" /></button>
      <button aria-label="Navigation bar options" className="mb-[2px] mr-[2px] mt-auto self-end">
        <svg viewBox="0 0 8 8" className="h-2 w-2" fill="none" stroke="#999"><circle cx="4" cy="4" r="3.500" /><path d="M2 3.500h4L4 5.500z" fill="#999" stroke="none" /></svg>
      </button>
    </div>
  );
}

const Lamp = () => (
  <g>
    <circle cx="36" cy="28" r="9" fill={CYAN} stroke="none" />
    <path d="M32 38h8v7h-8z" fill="#555" stroke="none" />
  </g>
);

const VIEW_CONTROLS = [
  ["Detail level", <><path d="M4 6h40v36H4z" fill="#eee" /><path d="M4 6l36 36M16 6l28 28M28 6l16 14M4 18l24 24M4 30l12 12M44 6L8 42M32 6L4 32M20 6L4 20M44 18L20 42M44 30L32 42" strokeWidth="2" /></>],
  ["Visual style", <path d="M4 16L14 4h30v26L34 44H4zM4 16h30v28M34 16L44 4" fill={BLUE} stroke="#1c6fb0" strokeWidth="4" />],
  ["Sun path", <><path d="M18 2v32M2 18h32M7 7l22 22M29 7L7 29" stroke={GOLD} strokeWidth="4" /><circle cx="18" cy="18" r="9" fill={GOLD} stroke="none" /><Lamp /></>],
  ["Shadows", <><circle cx="22" cy="18" r="15" fill="#e8e8e8" stroke="#888" strokeWidth="4" /><path d="M4 40h24" stroke="#999" strokeWidth="7" /><Lamp /></>],
  ["Rendering", <><path d="M2 10q10 2 12 20h18q10-6 8-18h-8M12 12h24M18 12V6h12v6" /><Lamp /></>],
  ["Crop view", <><path d="M0 20h12M14 46V16h30M14 16V2" stroke="#1976c8" /><path d="M16 40V18h26" strokeWidth="6" /><path d="M28 28l16 16M44 28L28 44" stroke={RED} strokeWidth="6" /></>],
  ["Crop region", <><path d="M0 30h14M24 2v10" stroke="#1976c8" strokeWidth="5" /><path d="M16 44V14h28" strokeWidth="6" /><Lamp /></>],
  ["Lock 3D view", <><path d="M2 24L24 3l20 20M9 20v24h14" fill="#f2f2f2" strokeWidth="5" /><path d="M18 26h8v18h-8z" fill="#666" stroke="none" /><path d="M26 28h20v16H26z" fill={CYAN} stroke="none" /></>],
  ["Temporary hide", <><circle cx="12" cy="30" r="7" /><circle cx="32" cy="30" r="7" /><path d="M5 27L18 12M25 27L40 12h4" /></>],
  ["Reveal hidden", <><circle cx="24" cy="16" r="12" fill={CYAN} stroke="none" /><path d="M18 30h12v14H18z" fill="#555" stroke="none" /></>],
  ["Temporary properties", <><path d="M6 38V4h24l8 8v6M6 38h12" /><path d="M18 18h16l10 10v16H18z" strokeDasharray="6 3" /></>],
  ["Analytical model", <><path d="M6 42V14L16 4h28v14M6 14h28V4" /><path d="M6 28h28M16 14v30M28 14v30" stroke="#c03030" /><Lamp /></>],
  ["Displacement sets", <path d="M4 20h20v22H4zM14 14L22 6h22v20l-10 10M24 20h8v18" fill="#cfe2f1" stroke="#45698a" />],
  ["Constraints", <><path d="M4 2v42M44 2v16M4 12h40M12 6l-8 6 8 6M36 6l8 6-8 6M4 40h16" /><Lamp /></>],
];

function Viewport() {
  return (
    <main className="flex min-w-0 flex-1 flex-col border-l-2 border-r-[3px] border-[#bfbfbf] bg-[#f5f5f5]">
      <div className="flex h-5 items-stretch bg-[#cbcbcb]">
        <ViewTab icon={<SheetIcon />} label="L1 - Architectural" className="w-[142px]" />
        <div className="flex w-32 items-center justify-between bg-white pr-[5px]">
          <ViewTab icon={<HomeIcon fill="#fff" />} label="{3D}" active />
          <button aria-label="Close view"><Close className="h-[9px] w-[9px]" /></button>
        </div>
        <ViewTab icon={<SheetIcon />} label="L2" className="w-[129px]" />
        <ViewTab icon={<HomeIcon fill="#888" />} label="North - Architectural" className="w-[162px]" />
        <ViewTab icon={<SheetIcon />} label="L3" />
        <button aria-label="Tab list" className="ml-auto flex w-6 flex-col items-center justify-center gap-[2px]">
          <span className="h-px w-2 bg-[#777]" />
          <Caret className="text-[#777]" size="h-1 w-[7px]" />
        </button>
      </div>
      <div className="flex min-h-0 flex-1">
        <div className="relative min-w-0 flex-1 bg-white">
          <Scene />
          <NavBar />
        </div>
        <div className="flex w-[17px] flex-col items-center justify-between bg-[#e8e8e8] py-1">
          <button aria-label="Scroll up"><Chevron d={UP} /></button>
          <span className="h-4 w-[5px] bg-[#d0d0d0]" />
          <button aria-label="Scroll down"><Chevron d={DOWN} /></button>
        </div>
      </div>
      <div className="mb-[2px] flex h-[17px] items-center">
        <button className="w-20 pl-[26px] text-left">1 : 100</button>
        <div className="flex">
          {VIEW_CONTROLS.map(([label, art]) => (
            <IconButton key={label} label={label} className="h-[17px] w-[26px]"><Small>{art}</Small></IconButton>
          ))}
        </div>
        <div className="flex h-full flex-1 items-center justify-between bg-[#e8e8e8] px-1">
          <button aria-label="Scroll left"><Chevron d={LEFT} /></button>
          <span className="h-[5px] w-4 bg-[#d0d0d0]" />
          <button aria-label="Scroll right"><Chevron d={RIGHT} /></button>
        </div>
        <span className="w-[17px] text-center text-[#888]">.:</span>
      </div>
    </main>
  );
}

/* ---------- project browser ---------- */

const VIEWS_ICON = <><path d="M2 12V3h9M36 3h9v9M45 36v9h-9M11 45H2v-9" strokeWidth="4" /><path d="M12 18l6-6h18v16l-6 7H12z" fill="#ddd" /></>;
const LEGEND_ICON = <><path d="M2 3h44v42H2z" strokeWidth="4" /><path d="M2 7h44" strokeWidth="7" /><path d="M9 18h10v8H9zM9 32h10v7H9zM25 18h14M25 25h14M25 32h14M25 39h14" strokeWidth="4" /></>;
const SCHEDULE_ICON = <><path d="M2 7h44v34H2zM2 19h44M2 30h44M16 10v31M31 10v31" strokeWidth="4" /><path d="M2 9h44" strokeWidth="6" /></>;
const SHEET_ICON = <path d="M2 7h32l12 10v25H2zM33 7v11h13" fill="#f6f6f6" strokeWidth="4" />;

// guide codes: v = line passes through, t = branch, l = last branch, . = blank
const TREE = [
  ["", "-", "Views (Discipline)", VIEWS_ICON],
  ["t", "-", "Architectural"],
  ["vt", "+", "Structural Plans"],
  ["vt", "-", "Floor Plans (Architectural Plan)"],
  ["vvt", "", "L1 - Architectural"],
  ["vvt", "", "L2"],
  ["vvt", "", "L2 - Architectural"],
  ["vvl", "", "L3"],
  ["vt", "+", "Floor Plans (Site Plan)"],
  ["vt", "+", "Ceiling Plans (Architectural Ceiling Plan)"],
  ["vl", "-", "Elevations (Building Elevation)"],
  ["v.t", "", "East - Architectural"],
  ["v.t", "", "North - Architectural"],
  ["v.t", "", "South - Architectural"],
  ["v.l", "", "West - Architectural"],
  ["t", "-", "Coordination"],
  ["vt", "+", "Floor Plans (Working Plan)"],
  ["vl", "+", "3D Views"],
  ["t", "-", "Electrical"],
  ["vt", "+", "Floor Plans (Lighting Plan)"],
  ["vt", "+", "Floor Plans (Power Plan)"],
  ["vl", "+", "Ceiling Plans (Electrical Ceiling Plan)"],
  ["t", "-", "Mechanical"],
  ["vt", "+", "Floor Plans (Mechanical Plan)"],
  ["vl", "+", "Ceiling Plans (Mechanical Ceiling Plan)"],
  ["t", "-", "Plumbing"],
  ["vl", "-", "Floor Plans (Plumbing Plan)"],
  ["v.t", "", "L1 - Plumbing"],
  ["v.l", "", "L2 - Plumbing"],
  ["l", "-", "Structural"],
  [".l", "+", "Structural Plans"],
  ["", "+", "Legends", LEGEND_ICON],
  ["", "+", "Schedules/Quantities (By Type)", SCHEDULE_ICON],
  ["", "-", "Sheets (all)", SHEET_ICON],
  ["t", "+", "A101 - Architectural Floor Plans"],
  ["t", "+", "A102 - Architectural Floor Plans"],
  ["t", "+", "A201 - Architectural Building Elevations"],
  ["t", "+", "A202 - Architectural Building Elevations"],
];

function Guide({ code }) {
  return (
    <span className="flex h-5 w-4 shrink-0 pl-[7px]">
      {code !== "." && (
        <span className={`border-l border-dashed border-[#b8b8b8] ${code === "l" ? "h-[11px]" : "h-5"}`} />
      )}
      {(code === "t" || code === "l") && <span className="mt-[10px] h-px flex-1 border-t border-dashed border-[#b8b8b8]" />}
    </span>
  );
}

function TreeRow({ guides, mark, label, icon, selected }) {
  return (
    <li role="treeitem" aria-selected={selected} className={`flex h-5 items-center ${selected ? "bg-[#f0f0f0] outline outline-[#dedede] -outline-offset-1" : ""}`}>
      {guides.split("").map((g, i) => <Guide key={i} code={g} />)}
      {mark ? (
        <button aria-label={`Toggle ${label}`} className="flex w-4 shrink-0 justify-center">
          <svg viewBox="0 0 8 8" className="h-2 w-2" stroke="#666" strokeWidth="2">
            <path d={mark === "+" ? "M0 4h8M4 0v8" : "M0 4h8"} />
          </svg>
        </button>
      ) : (
        <span className="mt-[1px] h-px w-4 shrink-0 border-t border-dashed border-[#b8b8b8]" />
      )}
      {icon && <span className="ml-1"><Small>{icon}</Small></span>}
      <span className="ml-[5px] whitespace-nowrap">{label}</span>
    </li>
  );
}

function Browser() {
  return (
    <aside className="flex w-[317px] shrink-0 flex-col bg-white pl-[1px] text-[#505050]">
      <div className="flex h-4 items-center justify-between bg-[#d8d8d8] pl-[3px] pr-[1px] text-[#3c3c3c]">
        <h2>Project Browser - Project1</h2>
        <button aria-label="Close browser"><Close /></button>
      </div>
      <label className="my-2 ml-[10px] mr-2 flex h-[25px] shrink-0 items-center gap-2 border border-[#dedede] pl-2">
        <svg viewBox="0 0 16 16" className="h-4 w-4" fill="none" stroke="#6b6b6b" strokeWidth="1.500" aria-hidden="true">
          <circle cx="6.500" cy="6.500" r="5" />
          <path d="M10.500 10.500l5 5" strokeWidth="2" />
        </svg>
        <input aria-label="Search" placeholder="Search" className="flex-1 outline-none placeholder:text-[#9a9a9a]" />
      </label>
      <div className="flex min-h-0 flex-1">
        <ul role="tree" className="min-w-0 flex-1 overflow-hidden pl-[3px]">
          {TREE.map(([guides, mark, label, icon], i) => (
            <TreeRow key={i} guides={guides} mark={mark} label={label} icon={icon} selected={i === 4} />
          ))}
        </ul>
        <div className="flex w-[17px] flex-col items-center justify-between bg-[#e8e8e8] py-1">
          <button aria-label="Scroll up"><Chevron d={UP} /></button>
          <span className="mb-auto mt-3 h-[460px] w-[5px] bg-[#d0d0d0]" />
          <button aria-label="Scroll down"><Chevron d={DOWN} /></button>
        </div>
      </div>
    </aside>
  );
}

/* ---------- status bar ---------- */

const Pointer = ({ off }) => (
  <g>
    {off && <path d="M30 2l14 14M44 2L30 16" stroke={RED} strokeWidth="6" />}
    <path d="M18 14v26l7-6 5 11 6-3-5-10h9z" fill="#fff" />
  </g>
);

const SELECT_TOOLS = [
  ["Select links", <><path d="M20 4H6a5 5 0 0 0 0 12h12" stroke="#d9622b" strokeWidth="4" /><Pointer off /></>],
  ["Select underlay", <><path d="M2 16L16 4h28L34 16zM2 28l10-10h26L30 28z" fill={BLUE} stroke={EDGE} /><Pointer /></>],
  ["Select pinned", <><path d="M2 6h22M6 6v12h12M2 30l12-12v20" /><Pointer off /></>],
  ["Select by face", <><path d="M4 12l16-8v30L4 44z" fill={BLUE} stroke={EDGE} /><Pointer off /></>],
  ["Drag on selection", <><path d="M0 20h34M18 2v36M6 14l-6 6 6 6" strokeWidth="4" /><Pointer off /></>],
  ["Background processes", <circle cx="24" cy="24" r="18" stroke="#b4b4b4" strokeWidth="7" strokeDasharray="6 8" />],
];

function StatusBar() {
  return (
    <footer className="flex h-6 items-center bg-[#f5f5f5] pr-[73px]">
      <p className="w-[895px] pl-[1px]">Walls : Basic Wall : M_Exterior - Brick on Wood Stud : R2</p>
      <label className="relative flex w-[229px] items-center">
        <Small>
          <circle cx="30" cy="9" r="7" fill="#e0763e" stroke="none" />
          <path d="M24 14h14v16H24z" fill="#d5713c" stroke="none" />
          <path d="M2 8q0-5 5-5h6v30H8q-6 0-6-6z" fill="#2f86c8" stroke="none" />
          <path d="M14 18q0-5 7-5t7 5v27H14z" fill="#49b36b" stroke="#2c8a4a" strokeWidth="2" />
          <path d="M28 44l14-14M36 26l10 8" stroke="#2570b0" strokeWidth="5" />
        </Small>
        <select aria-label="Active workset" className="h-5 flex-1 appearance-none" />
        <span className="pointer-events-none absolute right-1"><Chevron d={DOWN} className="h-[6px] w-[6px]" /></span>
      </label>
      <button className="ml-[10px] flex items-center text-[#808080]">
        <Small>
          <path d="M22 2h24v14H34l-7 6v-6h-5z" stroke="#777" />
          <path d="M14 12a6 6 0 0 1 5 10v8H9v-8a6 6 0 0 1 5-10zM5 30h18l3 14H2z" stroke="#777" />
        </Small>
        :0
      </button>
      <IconButton label="Design options" className="ml-5 h-6 w-7"><Small><path d="M3 3h42v42H3z" fill="#fff" strokeWidth="4" /><path d="M3 8h42" strokeWidth="9" /><path d="M10 20h6M20 20h18M10 28h6M20 28h18M10 36h6M20 36h18" strokeWidth="4" /></Small></IconButton>
      <IconButton label="Pick to edit" className="h-6 w-6"><Small><path d="M7 3h38v42H20" stroke="#999" strokeWidth="4" /><path d="M7 8h38" stroke="#999" strokeWidth="9" /><path d="M14 20h24M14 28h24M0 38h18M12 32l8 6-8 6" stroke="#999" strokeWidth="4" /></Small></IconButton>
      <div className="relative w-[204px]">
        <select aria-label="Design option" className="h-5 w-full appearance-none pl-[6px] text-[#999]">
          <option>Main Model</option>
        </select>
        <span className="pointer-events-none absolute right-0 top-2"><Chevron d={DOWN} className="h-[6px] w-[6px]" /></span>
      </div>
      <div className="ml-auto flex items-center">
        {SELECT_TOOLS.map(([label, art]) => (
          <IconButton key={label} label={label} className="h-6 w-[26px]"><Small>{art}</Small></IconButton>
        ))}
        <button aria-label="Filter" className="ml-1 flex items-center">
          <Small><path d="M2 4h44L29 24v20l-9-6V24z" fill="#ddd" strokeWidth="4" /></Small>
          :1
        </button>
      </div>
    </footer>
  );
}

export default function App() {
  return (
    <div className="flex h-screen flex-col overflow-hidden bg-[#d9d9d9] font-['Noto_Sans',sans-serif] text-[11px] leading-4 text-[#3c3c3c]">
      <TitleBar />
      <MenuBar />
      <Ribbon />
      <QuickAccess />
      <div className="flex h-[26px] items-center bg-[#e8efe3] pl-2">Modify | Shaft Openings</div>
      <div className="flex min-h-0 flex-1 border-t-2 border-[#bfbfbf]">
        <Properties />
        <Viewport />
        <Browser />
      </div>
      <StatusBar />
      <div className="h-[5px] bg-gradient-to-r from-[#243b40] to-[#1c2745] pl-[245px]">
        <div className="h-full w-12 bg-[#55646a]" />
      </div>
    </div>
  );
}
